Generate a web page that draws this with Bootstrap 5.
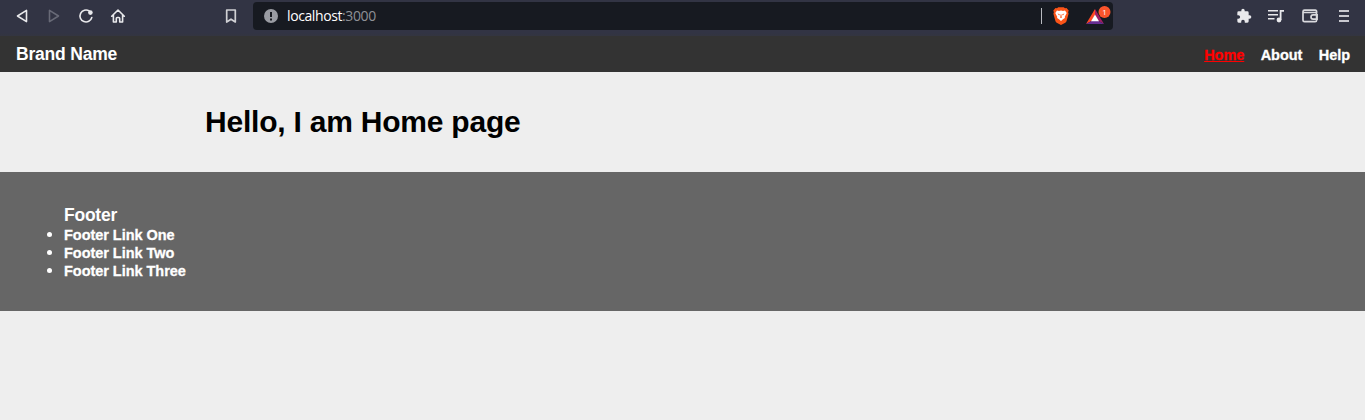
<!DOCTYPE html>
<html lang="en">
<head>
<meta charset="utf-8">
<meta name="viewport" content="width=device-width, initial-scale=1">
<title>Home</title>
<link href="https://cdn.jsdelivr.net/npm/bootstrap@5.3.0/dist/css/bootstrap.min.css" rel="stylesheet">
<style>
body{background:#eee;font-family:"Liberation Sans",Arial,sans-serif;font-weight:700;font-size:14.500px;letter-spacing:-.04px;line-height:18px;color:#000;overflow:hidden}
svg{display:block;flex:none}
.toolbar{height:36px;padding:0 13px 4px 14px;background:linear-gradient(#323444 33px,#333540 36px);color:#e9e9ec;letter-spacing:0}
.tool-group{gap:16px}
.bookmark{margin-left:97px}
.address{width:860px;height:28px;margin-left:14px;padding:0 2px 0 11px;background:#171a21;border-radius:4px;font:400 14px/28px "Open Sans","Noto Sans",sans-serif}
.host{font-size:14px;letter-spacing:-.4px;margin-left:9px;color:#fff}
.port{color:#8f9197}
.divider{width:1px;height:16px;background:#b9bbc0;margin-right:11px}
.rewards{margin-left:17px;width:25px;height:20px;margin-top:-3px}
.site-header{height:36px;background:#333;padding:0 15px 0 16px}
.brand{font-size:17.500px;letter-spacing:-.2px;color:#fff}
.site-nav{gap:16.400px;padding-top:2px}
.site-nav,.site-footer li{-webkit-text-stroke:.3px currentColor}
.site-nav a{color:#fff;text-decoration:none}
.site-nav a.active{color:#f00;text-decoration:underline}
.page{height:100px;padding:32px 0 0 205px}
.page h1{font-size:30px;line-height:36px;font-weight:700;letter-spacing:-.22px;margin:0}
.site-footer{height:139px;background:#666;color:#fff;padding:33px 64px 0}
.site-footer h2{font-size:17.500px;line-height:20px;font-weight:700;letter-spacing:-.25px;margin:0 0 1px}
.site-footer ul{margin:0;padding:0}
.site-footer li{height:18px}
.site-footer li::marker{font-size:17px}
</style>
</head>
<body>
<div class="toolbar d-flex align-items-center">
  <div class="tool-group d-flex">
    <svg width="16" height="16" viewBox="0 0 16 16" fill="none" stroke="currentColor" stroke-width="1.600" stroke-linejoin="round"><path d="M12.500 2.400v11.200L3.500 8z"/></svg>
    <svg width="16" height="16" viewBox="0 0 16 16" fill="none" stroke="#686a77" stroke-width="1.600" stroke-linejoin="round"><path d="M3.500 2.400v11.200L12.500 8z"/></svg>
    <svg width="16" height="16" viewBox="0 0 16 16" fill="none" stroke="currentColor" stroke-width="1.600" stroke-linecap="round"><path d="M11.200 2.900A6 6 0 1 0 13.800 9.500"/><circle cx="12.400" cy="4.600" r="2.300" fill="currentColor" stroke="none"/></svg>
    <svg width="16" height="16" viewBox="0 0 16 16" fill="none" stroke="currentColor" stroke-width="1.600" stroke-linejoin="round" stroke-linecap="round"><path d="M1.700 8.200 8 2l6.300 6.200M3.400 7v7h2.900v-3.500q0-1 1-1h1.400q1 0 1 1V14h2.900V7"/></svg>
  </div>
  <svg class="bookmark" width="16" height="16" viewBox="0 0 16 16" fill="none" stroke="#d0d0d4" stroke-width="1.700" stroke-linejoin="round"><path d="M3.700 2h8.600v12L8 11.200 3.700 14z"/></svg>
  <div class="address d-flex align-items-center">
    <svg width="14" height="14" viewBox="0 0 14 14"><circle cx="7" cy="7" r="7" fill="#9a9ca3"/><path d="M7 3v5M7 9.500v2" stroke="#171a21" stroke-width="2"/></svg>
    <span class="host">localhost<span class="port">:3000</span></span>
    <span class="divider ms-auto"></span>
    <svg width="16" height="18" viewBox="0 0 16 18"><path d="m4 1.200 1.300-1h5.400l1.300 1 1.500-.1 2.200 2.500-.6 1.600.5 1.500-2.100 7.600q-.3.8-1.200 1.400L8 18l-4.300-2.300q-.9-.6-1.200-1.400L.4 6.700l.5-1.500L.3 3.600l2.200-2.500z" fill="#fb5418"/><path d="m4 3.500 2 .4 2-.4 2 .4 2-.4 1.700 2.500-1.900 3.700.1 1.200-1.900 1.400L8 14l-2-1.700-1.900-1.400.1-1.200L2.300 6z" fill="#fff"/><path d="m4.500 6.600 2.300.6-.6 1.400zM11.500 6.600l-2.300.6.6 1.400zM7.500 7.500h1v2l.6.8-1.100.6-1.100-.6.6-.8z" fill="#fb5418"/></svg>
    <svg class="rewards" width="25" height="20" viewBox="0 0 25 20"><path d="M9 4 0 19l5.500-3L9 10z" fill="#ff4724"/><path d="m9 4 9 15-5.500-3L9 10z" fill="#9e1f63"/><path d="M0 19h18l-5.500-3h-7z" fill="#662d91"/><path d="m9 9.500-4 6.700h8z" fill="#fff"/><circle cx="18.500" cy="7" r="6" fill="#fb542b"/><text x="18.500" y="10" text-anchor="middle" font-size="8" fill="#fff" font-family="Open Sans, sans-serif">1</text></svg>
  </div>
  <div class="tool-group d-flex ms-auto">
    <svg width="16" height="16" viewBox="0 0 24 24" fill="currentColor"><path d="M20.500 11H19V7a2 2 0 0 0-2-2h-4V3.500a2.500 2.500 0 0 0-5 0V5H4a2 2 0 0 0-2 2v3.800h1.500a2.700 2.700 0 0 1 0 5.400H2V20a2 2 0 0 0 2 2h3.800v-1.500a2.700 2.700 0 0 1 5.400 0V22H17a2 2 0 0 0 2-2v-4h1.500a2.500 2.500 0 0 0 0-5z"/></svg>
    <svg width="16" height="16" viewBox="0 0 16 16"><path d="M0 2.800h10M0 6.800h10M0 10.800h6.500" stroke="currentColor" stroke-width="1.600"/><path d="M12.600 12V2.800H16" fill="none" stroke="currentColor" stroke-width="1.800"/><circle cx="11" cy="12" r="2.400" fill="currentColor"/></svg>
    <svg class="me-1" width="18" height="16" viewBox="-.8 0 18 16" overflow="visible" fill="none" stroke="#d9d9dd" stroke-width="1.700"><path d="M15.800 5V3.500Q15.800 2.200 14.500 2.200H3.700Q2.200 2.200 2.200 3.700v8.500q0 1.500 1.500 1.500h10.600q1.500 0 1.500-1.500V5.700Q15.800 4.500 14.500 4.500H3M16.300 6.900h-4a2.100 2.100 0 0 0 0 4.200h4z"/></svg>
    <svg style="margin-left:-2px" width="16" height="16" viewBox="0 0 16 16"><path d="M3 3h10M3 8h10M3 13h10" stroke="#c9c9cf" stroke-width="2"/></svg>
  </div>
</div>
<header class="site-header d-flex align-items-center justify-content-between">
  <span class="brand">Brand Name</span>
  <nav class="site-nav d-flex"><a class="active" href="#">Home</a><a href="#">About</a><a href="#">Help</a></nav>
</header>
<main class="page"><h1>Hello, I am Home page</h1></main>
<footer class="site-footer"><h2>Footer</h2><ul><li>Footer Link One</li><li>Footer Link Two</li><li>Footer Link Three</li></ul></footer>
<script src="https://cdn.jsdelivr.net/npm/bootstrap@5.3.0/dist/js/bootstrap.bundle.min.js"></script>
</body>
</html>
